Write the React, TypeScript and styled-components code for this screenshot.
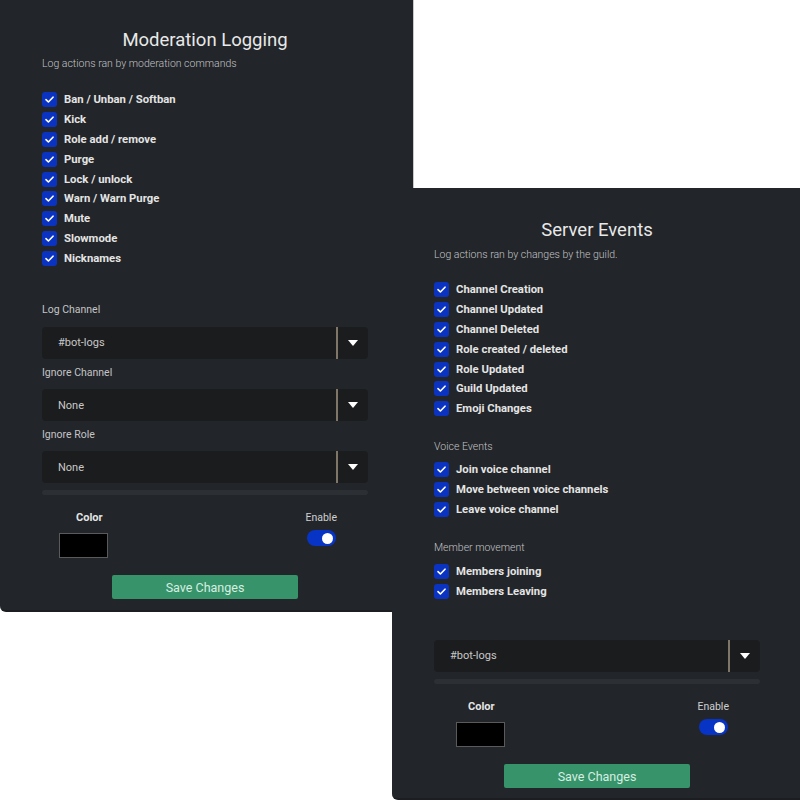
import React from "react";
import styled, { createGlobalStyle } from "styled-components";

const Global = createGlobalStyle`
  html, body { margin: 0; padding: 0; background: #ffffff; }
  body { width: 800px; height: 800px; overflow: hidden; font-family: Roboto, "Noto Sans", Arial, sans-serif; }
  #root { position: relative; width: 800px; height: 800px; }
`;

const Desktop = styled.div`
  position: relative;
  width: 800px;
  height: 800px;
  overflow: hidden;
  background: #ffffff;
`;

const Window = styled.section<{ $x: number; $y: number; $shift: number }>`
  position: absolute;
  left: ${(p) => p.$x}px;
  top: ${(p) => p.$y}px;
  width: 414px;
  height: 612px;
  box-sizing: border-box;
  padding: ${(p) => p.$shift}px 45px 0 42px;
  background: #222529;
  border-bottom: 2px solid #1b1d20;
  border-right: 1px solid #c8c8c8;
  border-radius: 0 0 0 6px;
  display: flex;
  flex-direction: column;
  color: #e6e6e6;
`;

const Title = styled.h1`
  margin: 29px 0 0;
  height: 22px;
  line-height: 22px;
  font-size: 18.5px;
  font-weight: 400;
  text-align: center;
  color: #e8e8e8;
`;

const Desc = styled.p<{ $gap: number }>`
  margin: ${(p) => p.$gap}px 0 0;
  line-height: 14px;
  font-size: 10.5px;
  font-weight: 300;
  color: #c2c4c6;
`;

const CheckList = styled.div<{ $gap: number }>`
  margin-top: ${(p) => p.$gap}px;
  display: flex;
  flex-direction: column;
`;

const CheckRow = styled.label`
  height: 19.8px;
  display: flex;
  align-items: center;
  gap: 7px;
  font-size: 11.3px;
  font-weight: 700;
  color: #e4e4e4;
`;

const Box = styled.span`
  width: 15px;
  height: 15px;
  border-radius: 3px;
  background: #0a33c2;
  display: flex;
  align-items: center;
  justify-content: center;
  flex: none;
`;

const SectionLabel = styled.div<{ $top: number; $bottom: number }>`
  margin: ${(p) => p.$top}px 0 ${(p) => p.$bottom}px;
  line-height: 14px;
  font-size: 10.5px;
  font-weight: 300;
  color: #c2c4c6;
`;

const FieldLabel = styled.div<{ $top: number }>`
  margin: ${(p) => p.$top}px 0 9.5px;
  line-height: 14px;
  font-size: 10.5px;
  font-weight: 400;
  color: #c2c4c6;
`;

const Select = styled.div<{ $top?: number }>`
  margin-top: ${(p) => p.$top ?? 0}px;
  height: 32px;
  border-radius: 4px;
  background: #1b1c1e;
  display: flex;
  align-items: stretch;
`;

const SelectValue = styled.div`
  flex: 1;
  padding-left: 16px;
  display: flex;
  align-items: center;
  font-size: 11px;
  color: #c8c8c8;
`;

const SelectDivider = styled.div`
  width: 2px;
  background: #7f7668;
`;

const SelectArrow = styled.div`
  width: 30px;
  display: flex;
  align-items: center;
  justify-content: center;
`;

const Bar = styled.div<{ $top: number }>`
  margin-top: ${(p) => p.$top}px;
  height: 5px;
  border-radius: 3px;
  background: #2c2f33;
`;

const BottomRow = styled.div`
  margin-top: 16px;
  display: flex;
  justify-content: space-between;
`;

const ColorCol = styled.div`
  padding-left: 17px;
  display: flex;
  flex-direction: column;
  align-items: flex-start;
`;

const ColorLabel = styled.div`
  margin-left: 17px;
  line-height: 14px;
  font-size: 11px;
  font-weight: 700;
  color: #e4e4e4;
`;

const Swatch = styled.div<{ $offset: number }>`
  margin-top: 8px;
  margin-left: ${(p) => p.$offset}px;
  width: 49px;
  height: 25px;
  box-sizing: border-box;
  background: #000;
  border: 1px solid #5a5a5a;
`;

const EnableCol = styled.div`
  margin-right: 31px;
  display: flex;
  flex-direction: column;
  align-items: center;
`;

const EnableLabel = styled.div`
  line-height: 14px;
  font-size: 10.5px;
  color: #d0d0d0;
`;

const Toggle = styled.div`
  margin-top: 5px;
  width: 29px;
  height: 16px;
  border-radius: 8px;
  background: #0734c4;
  display: flex;
  align-items: center;
  justify-content: flex-end;
  padding-right: 3px;
  box-sizing: border-box;
`;

const Knob = styled.span`
  width: 11px;
  height: 11px;
  border-radius: 50%;
  background: #fff;
`;

const SaveButton = styled.button<{ $top: number }>`
  margin: ${(p) => p.$top}px auto 0;
  width: 186px;
  height: 24px;
  border: none;
  border-radius: 2px;
  background: #37946a;
  color: #d8eee2;
  font-family: inherit;
  font-size: 12.5px;
  font-weight: 400;
  padding: 0;
`;

const Check = () => (
  <svg width="9" height="7" viewBox="0 0 9 7">
    <path d="M1 3.6 L3.4 6 L8 1.2" fill="none" stroke="#fff" strokeWidth="1.6" strokeLinecap="round" strokeLinejoin="round" />
  </svg>
);

const Arrow = () => (
  <svg width="10" height="6" viewBox="0 0 10 6">
    <path d="M0 0 H10 L5 6 Z" fill="#ffffff" />
  </svg>
);

const Checks = ({ items, gap }: { items: string[]; gap: number }) => (
  <CheckList $gap={gap}>
    {items.map((t) => (
      <CheckRow key={t}>
        <Box>
          <Check />
        </Box>
        {t}
      </CheckRow>
    ))}
  </CheckList>
);

const Dropdown = ({ value, top }: { value: string; top?: number }) => (
  <Select $top={top}>
    <SelectValue>{value}</SelectValue>
    <SelectDivider />
    <SelectArrow>
      <Arrow />
    </SelectArrow>
  </Select>
);

const Footer = ({ swatchOffset, buttonTop }: { swatchOffset: number; buttonTop: number }) => (
  <>
    <BottomRow>
      <ColorCol>
        <ColorLabel>Color</ColorLabel>
        <Swatch $offset={swatchOffset} />
      </ColorCol>
      <EnableCol>
        <EnableLabel>Enable</EnableLabel>
        <Toggle>
          <Knob />
        </Toggle>
      </EnableCol>
    </BottomRow>
    <SaveButton $top={buttonTop}>Save Changes</SaveButton>
  </>
);

export default function App() {
  return (
    <Desktop>
      <Global />
      <Window $x={0} $y={0} $shift={0}>
        <Title>Moderation Logging</Title>
        <Desc $gap={6}>Log actions ran by moderation commands</Desc>
        <Checks
          gap={19}
          items={[
            "Ban / Unban / Softban",
            "Kick",
            "Role add / remove",
            "Purge",
            "Lock / unlock",
            "Warn / Warn Purge",
            "Mute",
            "Slowmode",
            "Nicknames",
          ]}
        />
        <FieldLabel $top={35}>Log Channel</FieldLabel>
        <Dropdown value="#bot-logs" />
        <FieldLabel $top={7}>Ignore Channel</FieldLabel>
        <Dropdown value="None" />
        <FieldLabel $top={6.5}>Ignore Role</FieldLabel>
        <Dropdown value="None" />
        <Bar $top={7} />
        <Footer swatchOffset={0} buttonTop={17} />
      </Window>
      <Window $x={392} $y={188} $shift={2}>
        <Title>Server Events</Title>
        <Desc $gap={7}>Log actions ran by changes by the guild.</Desc>
        <Checks
          gap={18}
          items={[
            "Channel Creation",
            "Channel Updated",
            "Channel Deleted",
            "Role created / deleted",
            "Role Updated",
            "Guild Updated",
            "Emoji Changes",
          ]}
        />
        <SectionLabel $top={21} $bottom={6}>Voice Events</SectionLabel>
        <Checks
          gap={0}
          items={["Join voice channel", "Move between voice channels", "Leave voice channel"]}
        />
        <SectionLabel $top={22} $bottom={7}>Member movement</SectionLabel>
        <Checks gap={0} items={["Members joining", "Members Leaving"]} />
        <Dropdown value="#bot-logs" top={38} />
        <Bar $top={7.5} />
        <Footer swatchOffset={5} buttonTop={17} />
      </Window>
    </Desktop>
  );
}
